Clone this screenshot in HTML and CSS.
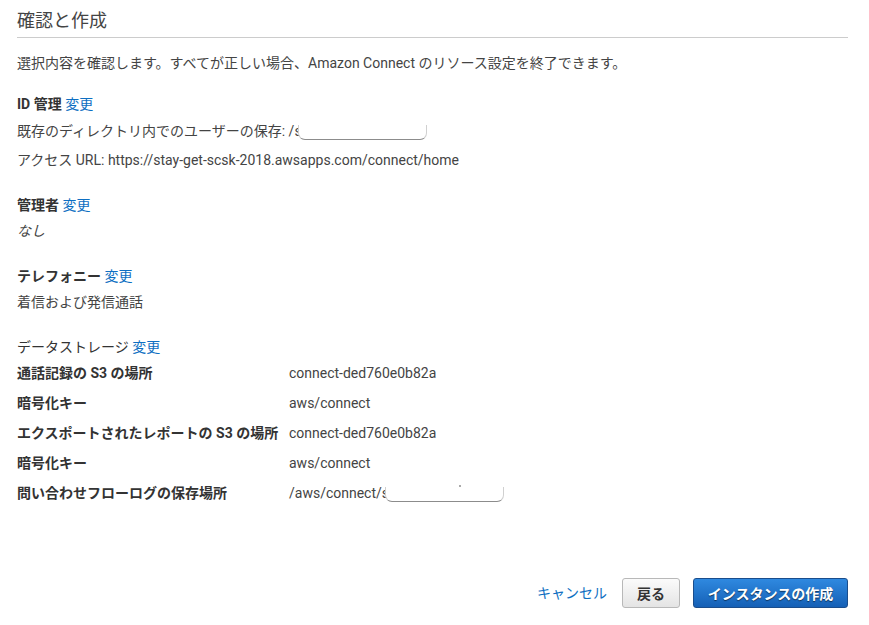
FILE: index.html
```html
<!DOCTYPE html>
<html lang="ja">
<head>
<meta charset="utf-8">
<title>確認と作成</title>
<link rel="stylesheet" href="styles.css">
</head>
<body>
<div class="page">
  <h2 class="title">確認と作成</h2>
  <p class="desc">選択内容を確認します。すべてが正しい場合、Amazon Connect のリソース設定を終了できます。</p>

  <section class="sec sec-id">
    <h3 class="sec-head">ID 管理 <a class="link" href="#">変更</a></h3>
    <p class="line">既存のディレクトリ内でのユーザーの保存: /s<span class="redact redact-1"></span></p>
    <p class="line line-url">アクセス URL: https://stay-get-scsk-2018.awsapps.com/connect/home</p>
  </section>

  <section class="sec">
    <h3 class="sec-head">管理者 <a class="link" href="#">変更</a></h3>
    <p class="line italic">なし</p>
  </section>

  <section class="sec">
    <h3 class="sec-head">テレフォニー <a class="link" href="#">変更</a></h3>
    <p class="line">着信および発信通話</p>
  </section>

  <section class="sec">
    <h3 class="sec-head regular">データストレージ <a class="link" href="#">変更</a></h3>
    <div class="rows">
      <div class="k">通話記録の S3 の場所</div><div class="v">connect-ded760e0b82a</div>
      <div class="k">暗号化キー</div><div class="v">aws/connect</div>
      <div class="k">エクスポートされたレポートの S3 の場所</div><div class="v">connect-ded760e0b82a</div>
      <div class="k">暗号化キー</div><div class="v">aws/connect</div>
      <div class="k">問い合わせフローログの保存場所</div><div class="v">/aws/connect/s<span class="redact redact-2"><span class="dot"></span></span></div>
    </div>
  </section>

  <div class="footer">
    <a class="cancel" href="#">キャンセル</a>
    <button class="btn btn-back" type="button">戻る</button>
    <button class="btn btn-primary" type="button">インスタンスの作成</button>
  </div>
</div>
</body>
</html>
```

FILE: styles.css
```css
html, body {
  margin: 0;
  padding: 0;
  background: #fff;
}

body {
  font-family: Roboto, "Noto Sans CJK JP", sans-serif;
  font-size: 14px;
  color: #444;
}

.page {
  width: 831px;
  margin-left: 17px;
}

.title {
  margin: 0;
  padding-top: 9px;
  padding-bottom: 4px;
  font-size: 18px;
  line-height: 24px;
  font-weight: normal;
  color: #444;
  border-bottom: 1px solid #cccccc;
}

.desc {
  margin: 15px 0 0;
  line-height: 20px;
}

.sec {
  margin-top: 25px;
}

.sec-id {
  margin-top: 21px;
}

.sec-head {
  margin: 0;
  font-size: 14px;
  line-height: 20px;
  font-weight: bold;
  color: #333;
}

.sec-head.regular {
  font-weight: normal;
}

.link {
  color: #0e6fc2;
  text-decoration: none;
  font-weight: normal;
}

.line {
  margin: 6px 0 0;
  line-height: 20px;
}

.sec-id .line {
  margin-top: 7px;
}

.sec-id .line-url {
  margin-top: 9px;
}

.italic {
  font-style: italic;
}

.redact {
  position: relative;
  display: inline-block;
  vertical-align: -4px;
  height: 14px;
  margin-left: -4px;
  background: #fff;
  border: 1px solid;
  border-color: transparent #d0d0d0 #8c8c8c #d0d0d0;
  border-top: none;
  border-radius: 0 0 7px 7px;
}

.redact-1 {
  width: 127px;
}

.redact-2 {
  width: 117px;
}

.dot {
  position: absolute;
  left: 73px;
  top: -2px;
  width: 2px;
  height: 2px;
  background: #aaa;
}

.rows {
  margin-top: 1px;
  display: grid;
  grid-template-columns: 272px 1fr;
  grid-auto-rows: 30px;
  align-items: center;
}

.k {
  font-weight: bold;
  color: #333;
  line-height: 20px;
}

.v {
  line-height: 20px;
}

.footer {
  margin-top: 70px;
  display: flex;
  justify-content: flex-end;
  align-items: center;
}

.cancel {
  color: #0e6fc2;
  text-decoration: none;
  line-height: 20px;
  margin-right: 15px;
}

.btn {
  font-family: Roboto, "Noto Sans CJK JP", sans-serif;
  font-size: 14px;
  font-weight: bold;
  height: 30px;
  border-radius: 3px;
  padding: 0;
  cursor: pointer;
}

.btn-back {
  width: 58px;
  color: #333;
  background: linear-gradient(#fbfbfb, #e4e4e4);
  border: 1px solid #b8b8b8;
  margin-right: 13px;
}

.btn-primary {
  width: 155px;
  color: #fff;
  background: linear-gradient(#2f89e0, #1560b6);
  border: 1px solid #1a4d8c;
  text-shadow: 0 1px 1px rgba(0, 0, 0, 0.55);
}
```
